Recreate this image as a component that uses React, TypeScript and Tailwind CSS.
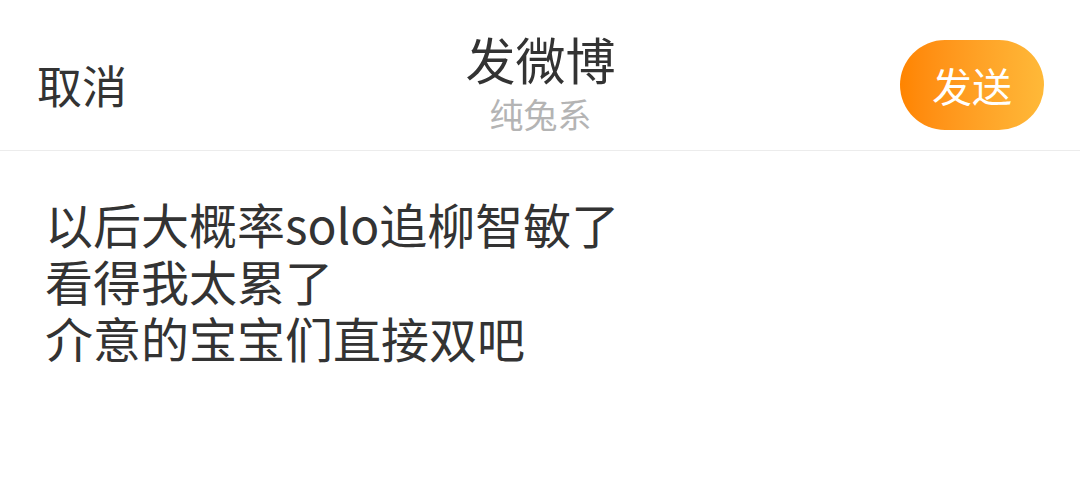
export default function App() {
  const font = { fontFamily: '"Noto Sans CJK SC", "Noto Sans", sans-serif' }
  return (
    <div className="w-[1080px] h-[481px] bg-white overflow-hidden" style={font}>
      {/* Header */}
      <div className="h-[151px] flex items-start justify-between border-b border-[#ececec] pl-[37px] pr-[36px]">
        <div className="w-[200px] mt-[62px] text-[45px] leading-none text-[#333333]">取消</div>
        <div className="flex flex-col items-center mt-[30px]">
          <div className="text-[50px] leading-[56px] text-[#333333]">发微博</div>
          <div className="text-[34px] leading-[40px] text-[#b4b4b4] mt-[8px]">纯兔系</div>
        </div>
        <div className="w-[200px] mt-[40px] flex justify-end">
          <button className="w-[144px] h-[90px] rounded-full bg-gradient-to-r from-[#ff8400] to-[#ffb938] text-white text-[40px] leading-none">
            发送
          </button>
        </div>
      </div>

      {/* Body */}
      <div className="pl-[45px] pt-[44px] text-[48px] leading-[57px] text-[#333333]">
        <p>以后大概率solo追柳智敏了</p>
        <p>看得我太累了</p>
        <p>介意的宝宝们直接双吧</p>
      </div>
    </div>
  )
}
